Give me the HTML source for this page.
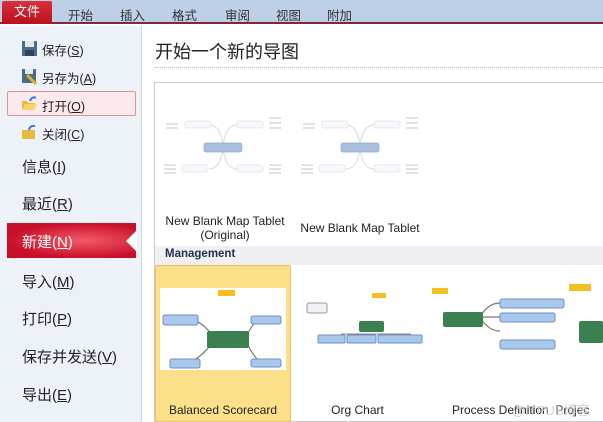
<!DOCTYPE html>
<html><head><meta charset="utf-8"><style>
*{margin:0;padding:0;box-sizing:border-box}
body{width:603px;height:422px;overflow:hidden;position:relative;background:#fff;font-family:"Liberation Sans","Noto Sans CJK SC",sans-serif;color:#222}
.a{position:absolute}
#bar{left:0;top:0;width:603px;height:24px;background:#bdd0e7;border-bottom:2px solid #7a2a3a}
.tab{top:5px;font-size:12.5px;color:#333}
#file{left:2px;top:1px;width:50px;height:23px;background:linear-gradient(#d8313c,#b8101c);color:#fff;font-size:13px;text-align:center;line-height:22px;border-radius:2px 2px 0 0}
#side{left:0;top:26px;width:142px;height:396px;background:#edf2f9;border-right:1px solid #cdd8e6}
.mi{left:22px;font-size:15px;color:#222}
.si{left:42px;font-size:12.5px;color:#222}
#open{left:7px;top:91px;width:129px;height:25px;border:1px solid #e0909a;background:#fbe9ec;border-radius:2px}
#new{left:7px;top:223px;width:129px;height:35px;background:radial-gradient(ellipse at 60% 50%,#f35a6a,#c8102a 70%)}
#title{left:155px;top:38px;font-size:18px;color:#222}
#dots{left:155px;top:67px;width:448px;border-top:1px dotted #bbb}
#box{left:154px;top:82px;width:449px;height:340px;border:1px solid #ccc;border-right:none}
.cap{font-size:12px;color:#222;text-align:center}
#mg{left:155px;top:246px;width:448px;height:19px;background:#eef0f3;font-size:11.5px;font-weight:bold;color:#1e3050;padding:2px 0 0 10px}
#sel{left:155px;top:265px;width:136px;height:157px;background:#fde08a;border:1px solid #e8c060;border-radius:2px}
</style></head><body>
<div id="bar" class="a"></div>
<div id="file" class="a">文件</div>
<div class="a tab" style="left:68px">开始</div>
<div class="a tab" style="left:120px">插入</div>
<div class="a tab" style="left:172px">格式</div>
<div class="a tab" style="left:225px">审阅</div>
<div class="a tab" style="left:276px">视图</div>
<div class="a tab" style="left:327px">附加</div>

<div id="side" class="a"></div>
<div id="open" class="a"></div>
<div id="new" class="a"></div>
<svg class="a" style="left:126px;top:230px" width="11" height="22"><polygon points="11,0 0,11 11,22" fill="#fff"/></svg>

<svg class="a" style="left:21px;top:40px" width="17" height="17"><rect x="1" y="1" width="15" height="15" fill="#4b6a8c"/><rect x="4" y="1" width="9" height="6" fill="#dfe7f0"/><rect x="4" y="10" width="9" height="6" fill="#2e4560"/></svg>
<svg class="a" style="left:21px;top:68px" width="17" height="17"><rect x="1" y="1" width="14" height="14" fill="#4b6a8c"/><rect x="4" y="1" width="8" height="5" fill="#dfe7f0"/><path d="M6 7 L15 16" stroke="#e8b030" stroke-width="3"/></svg>
<svg class="a" style="left:21px;top:95px" width="17" height="17"><path d="M1 6 H6 L7 8 H14 V15 H1Z" fill="#e8b840"/><path d="M1 15 L4 9 H16 L13 15Z" fill="#f5d46a"/><path d="M9 6 Q11 1 15 3" stroke="#3a7ad0" stroke-width="2" fill="none"/></svg>
<svg class="a" style="left:21px;top:123px" width="17" height="17"><rect x="1" y="7" width="13" height="9" fill="#e8b840"/><path d="M8 7 Q9 2 14 3" stroke="#3a7ad0" stroke-width="2" fill="none"/></svg>
<div class="a si" style="top:40px">保存(<u>S</u>)</div>
<div class="a si" style="top:68px">另存为(<u>A</u>)</div>
<div class="a si" style="top:96px">打开(<u>O</u>)</div>
<div class="a si" style="top:124px">关闭(<u>C</u>)</div>
<div class="a mi" style="top:156px">信息(<u>I</u>)</div>
<div class="a mi" style="top:193px">最近(<u>R</u>)</div>
<div class="a mi" style="top:231px;color:#fff">新建(<u>N</u>)</div>
<div class="a mi" style="top:271px">导入(<u>M</u>)</div>
<div class="a mi" style="top:308px">打印(<u>P</u>)</div>
<div class="a mi" style="top:346px">保存并发送(<u>V</u>)</div>
<div class="a mi" style="top:384px">导出(<u>E</u>)</div>

<div id="title" class="a">开始一个新的导图</div>
<div id="dots" class="a"></div>
<div id="box" class="a"></div>

<svg class="a" style="left:155px;top:83px" width="448" height="162">
<g id="m" fill="none" stroke="#dde1e8" stroke-width="1.3">
<path d="M68 64 Q70 42 82 42 M68 64 Q70 86 82 86 M68 64 Q66 42 54 42 M68 64 Q66 86 54 86"/>
<rect x="49" y="60" width="38" height="9" rx="2" fill="#a9bfe0" stroke="#8fa8cf" stroke-width=".7"/>
<rect x="30" y="38" width="26" height="7" rx="2" fill="#f6f8fb" stroke-width=".7"/>
<rect x="82" y="38" width="26" height="7" rx="2" fill="#f6f8fb" stroke-width=".7"/>
<rect x="27" y="82" width="26" height="7" rx="2" fill="#f6f8fb" stroke-width=".7"/>
<rect x="82" y="82" width="26" height="7" rx="2" fill="#f6f8fb" stroke-width=".7"/>
<g stroke="#c4c4c4" stroke-width="1"><path d="M11 41h12M11 45h12M114 35h12M114 40h12M114 45h12M9 82h12M9 86h12M9 90h12M114 82h12M114 86h12M114 90h12"/></g>
</g>
<use href="#m" x="137"/>
</svg>
<div class="a cap" style="left:155px;top:214px;width:140px">New Blank Map Tablet<br>(Original)</div>
<div class="a cap" style="left:290px;top:221px;width:140px">New Blank Map Tablet</div>

<div id="mg" class="a">Management</div>
<div id="sel" class="a"></div>
<svg class="a" style="left:155px;top:265px" width="448" height="157">
<rect x="5" y="23" width="126" height="82" fill="#fff"/>
<g fill="none" stroke="#777" stroke-width="1.2"><path d="M60 74 Q45 52 30 55 M60 74 Q45 96 30 98 M90 74 Q100 52 108 55 M90 74 Q100 96 108 98"/></g>
<rect x="52" y="66" width="42" height="17" rx="2" fill="#3b8050"/>
<rect x="8" y="50" width="35" height="10" rx="2" fill="#a9c8ec" stroke="#6a90c0"/>
<rect x="15" y="94" width="30" height="9" rx="2" fill="#a9c8ec" stroke="#6a90c0"/>
<rect x="96" y="51" width="30" height="8" rx="2" fill="#a9c8ec" stroke="#6a90c0"/>
<rect x="96" y="94" width="30" height="8" rx="2" fill="#a9c8ec" stroke="#6a90c0"/>
<rect x="63" y="25" width="17" height="6" fill="#f4c020"/>
<rect x="152" y="38" width="20" height="10" rx="2" fill="#eef2f6" stroke="#999"/>
<rect x="217" y="28" width="14" height="5" fill="#f4c020"/>
<rect x="204" y="56" width="25" height="11" rx="2" fill="#3b8050"/>
<path d="M186 69h70" stroke="#888"/>
<rect x="163" y="70" width="27" height="8" rx="1" fill="#a9c8ec" stroke="#6a90c0"/>
<rect x="192" y="70" width="29" height="8" rx="1" fill="#a9c8ec" stroke="#6a90c0"/>
<rect x="223" y="70" width="44" height="8" rx="1" fill="#a9c8ec" stroke="#6a90c0"/>
<rect x="277" y="23" width="16" height="6" fill="#f4c020"/>
<g fill="none" stroke="#777" stroke-width="1.2"><path d="M325 52 Q333 38 345 38 M325 52H345 M325 52 Q333 66 345 66"/></g>
<rect x="288" y="47" width="40" height="15" rx="2" fill="#3b8050"/>
<rect x="345" y="34" width="64" height="9" rx="2" fill="#a9c8ec" stroke="#6a90c0"/>
<rect x="345" y="48" width="55" height="9" rx="2" fill="#a9c8ec" stroke="#6a90c0"/>
<rect x="345" y="75" width="55" height="9" rx="2" fill="#a9c8ec" stroke="#6a90c0"/>
<rect x="414" y="19" width="22" height="7" fill="#f4c020"/>
<rect x="424" y="56" width="24" height="22" rx="2" fill="#3b8050"/>
</svg>
<div class="a cap" style="left:155px;top:403px;width:136px">Balanced Scorecard</div>
<div class="a cap" style="left:300px;top:403px;width:115px">Org Chart</div>
<div class="a cap" style="left:452px;top:403px;width:150px;text-align:left;white-space:nowrap">Process Definition &nbsp;Projec</div>
<div class="a" style="left:512px;top:400px;font-size:13px;color:rgba(200,200,200,.8)">@ITPUB博客</div>
</body></html>
